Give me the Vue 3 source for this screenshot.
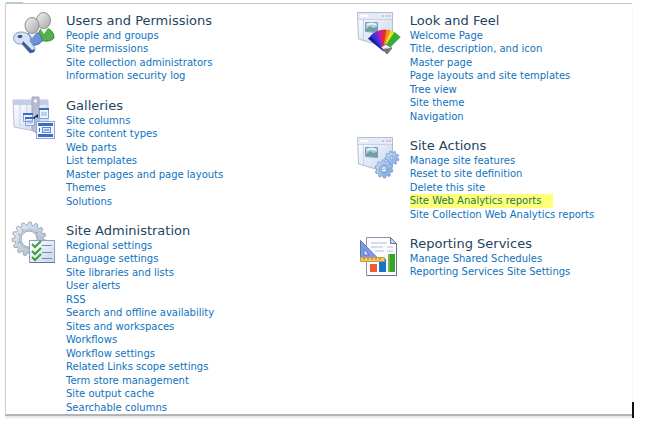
<template>
  <main class="settings-page">
    <div class="settings-panel">
      <div v-for="(column, columnIndex) in columns" :key="columnIndex" class="column">
        <section v-for="group in column" :key="group.title" class="group">
          <!-- Users and key -->
          <svg v-if="group.icon === 'users'" class="icon" viewBox="0 0 42 42" aria-hidden="true">
            <path d="M25 27c0-7 2-11 6-11 6 0 10 4 10 10-3 4-11 4-16 1z" fill="#58ad4d" stroke="#3c8a3b" />
            <path d="M27 16l4 6 4-6z" fill="#eef6ee" />
            <ellipse cx="30.500" cy="8.500" rx="7" ry="8" fill="url(#head)" stroke="#8d8d8d" />
            <path d="M13 30c0-7 1-10 7-10 6 0 9 4 9 9-3 5-12 6-16 1z" fill="#6f93d6" stroke="#4568b0" />
            <path d="M15 20l4 6 5-6z" fill="#eef3fb" />
            <ellipse cx="19" cy="13.500" rx="7" ry="8" fill="url(#head)" stroke="#8d8d8d" />
            <path d="M1 24c1-4 8-5 12-3 4 2 5 5 4 8l5 7-1 4-4 1-8-9c-5 1-10-3-8-8z" fill="#d4e3f5" stroke="#7f9cc4" />
            <path d="M9 32l8 9 4-1 1-3-3 1-9-9z" fill="#3f5f8e" />
            <ellipse cx="7" cy="24.500" rx="2.500" ry="1.700" fill="#455d80" />
          </svg>

          <!-- Galleries -->
          <svg v-else-if="group.icon === 'galleries'" class="icon" viewBox="0 0 42 42" aria-hidden="true">
            <path d="M0 3h35v24L21 34 1 30z" fill="url(#sheet)" stroke="#b9c2d8" />
            <path d="M0 3h35v5H0z" fill="#c3cdea" />
            <path d="M7 8v22M14 8v23" stroke="#c9d1e4" />
            <path d="M19 0h7v34l-3 2-4-3z" fill="#b9bdd0" stroke="#a3a9bf" />
            <circle cx="22.500" cy="4" r="1.500" fill="#fff" />
            <g fill="#eef4ff" stroke="#7ba0de">
              <path d="M10.500 16.500h9v8h-9zM12.500 20.500h9v8h-9zM26.500 11.500h9v10h-9z" />
            </g>
            <path d="M10 16h10v2H10zM12 20h10v2H12zM26 11h10v2H26z" fill="#3a6cc6" />
            <path d="M14 24h6M14 26h6M28 16h6M28 18h6" stroke="#86a8de" />
            <path d="M21 20l4-3v4l-2-1-2 2z" fill="#222b3b" />
            <rect x="23.500" y="24.500" width="18" height="17" fill="#f2f7ff" stroke="#8fa9d6" />
            <path d="M25 26h15v3H25zM25 37h15v3H25z" fill="#3c6cc4" />
            <path d="M26.500 31v4" stroke="#3c6cc4" />
            <rect x="29.500" y="30.500" width="8" height="5" fill="#dce9fc" stroke="#5c86ce" />
            <path d="M31 33h5" stroke="#3c6cc4" />
          </svg>

          <!-- Gear with checklist -->
          <svg v-else-if="group.icon === 'administration'" class="icon" viewBox="0 0 42 42" aria-hidden="true">
            <path :d="gearPath(16, 17, 17, 14, 15, 8)" fill="url(#steel)" fill-rule="evenodd" stroke="#9aa9ba" />
            <circle cx="16" cy="17" r="9.500" fill="none" stroke="#a9b9ca" />
            <path d="M5 12l2 1M9 7l1 2M5 21l2-1M25 10l-2 1" stroke="#7f94ae" />
            <rect x="16.500" y="18.500" width="25" height="22" fill="url(#sheet)" stroke="#8f9fc2" />
            <path d="M17 40.500h25" stroke="#6277a6" />
            <path d="M29 23.500h10M29 30.500h10M29 36.500h10" stroke="#7c89a8" />
            <path d="M19 22l3 3 6-6M19 29l3 3 6-6M19 35l3 3 6-6" fill="none" stroke="#3f9f32" stroke-width="2" />
          </svg>

          <!-- Report -->
          <svg v-else-if="group.icon === 'reporting'" class="icon" viewBox="0 0 42 42" aria-hidden="true">
            <path d="M9.500 2.500h24l6 6v32h-30z" fill="#fbfcff" stroke="#8994ac" />
            <path d="M10 40.500h30M39.500 9v31" stroke="#68748e" />
            <path d="M33.500 2.500v6h6z" fill="#cbd5e8" stroke="#68748e" />
            <path d="M14 8h16M14 12h12M18 16h9M30 12h6M30 16h6" stroke="#b3bdd4" />
            <path d="M13 29h7v8h-7z" fill="#ee5c31" />
            <path d="M22 24h7v13h-7z" fill="#1874c5" />
            <path d="M31 19h7v18h-7z" fill="#3aa32c" />
            <path d="M31 19h2v18h-2z" fill="#63bd50" />
            <path d="M3.500 5.500v18H21z" fill="#7c9be0" stroke="#5375c2" />
            <path d="M7 14v6h5z" fill="#e8f0ff" stroke="#5375c2" />
            <path d="M3.500 22.500h24v4h-24z" fill="#f6c968" stroke="#c99845" />
            <path d="M7 23v2M11 23v2M15 23v2M19 23v2M23 23v2" stroke="#9d7230" />
          </svg>

          <!-- Browser window with a fan of colours or two gears -->
          <svg v-else class="icon" viewBox="0 0 42 42" aria-hidden="true">
            <path d="M.5.5h35v31L22 33 1.500 27z" fill="url(#sheet)" stroke="#b4bccf" />
            <path d="M1 1h34v6H1z" fill="#e4eaf6" />
            <path d="M1 7.500h34M6.500 8v20" stroke="#c9d2e4" />
            <path d="M25 4h2M29 4h2M32 4h2" stroke="#b89aa8" />
            <path d="M3 4h8" stroke="#fff" stroke-width="2" />
            <path d="M8.500 10.500h12v10l-12-1z" fill="#a9cbed" stroke="#8298bd" />
            <path d="M9 17l4-3 3 2 4-1v5l-11-1z" fill="#6f9f99" />
            <path d="M10 13c3-2 6-2 9 0" fill="none" stroke="#e7f5ff" stroke-width="2" />
            <g v-if="group.icon === 'look'">
              <path
                v-for="(color, index) in fanColors"
                :key="color"
                d="M26 38l-2-20h8l-2 20z"
                :fill="color"
                :transform="`rotate(${index * 12 - 45} 28 38)`"
              />
              <path d="M24 35l5-3 6 4-5 6z" fill="#e4e4ea" stroke="#73737f" />
              <path d="M25 37l5 5 5-6z" fill="#73737f" />
              <circle cx="28" cy="35" r="1" fill="#fff" />
            </g>
            <g v-else fill-rule="evenodd" stroke="#7fa3d4">
              <path :d="gearPath(35, 21, 7, 5, 9, 2)" fill="url(#blueGear)" />
              <path :d="gearPath(27, 32, 9, 7, 10, 3)" fill="url(#blueGear)" />
              <circle cx="27" cy="32" r="4.500" fill="none" stroke="#7ba4d8" />
            </g>
          </svg>

          <div class="group-content">
            <h2>{{ group.title }}</h2>
            <ul>
              <li v-for="link in group.links" :key="link">
                <a href="#" :class="{ highlighted: link === highlightedLink }">{{ link }}</a>
              </li>
            </ul>
          </div>
        </section>
      </div>
      <span class="panel-tab"></span>
      <span class="caret"></span>
    </div>

    <!-- Shared gradients -->
    <svg class="gradients" width="0" height="0" aria-hidden="true">
      <defs>
        <linearGradient id="head" x2="1" y2="1">
          <stop stop-color="#f4f4f4" />
          <stop offset="1" stop-color="#a5a5a5" />
        </linearGradient>
        <linearGradient id="sheet" x2="1" y2="1">
          <stop stop-color="#ffffff" />
          <stop offset="1" stop-color="#c7d4ee" />
        </linearGradient>
        <linearGradient id="steel" x2="1" y2="1">
          <stop stop-color="#eef2f6" />
          <stop offset="1" stop-color="#9eb0c4" />
        </linearGradient>
        <linearGradient id="blueGear" x2="1" y2="1">
          <stop stop-color="#d4e6fb" />
          <stop offset="1" stop-color="#73a1dc" />
        </linearGradient>
      </defs>
    </svg>
  </main>
</template>

<script setup>
const highlightedLink = 'Site Web Analytics reports';

const fanColors = ['#1d1b9c', '#2738e0', '#7a28c8', '#cf1fa2', '#e92929', '#f58a1d', '#e8df28', '#38ad35'];

const columns = [
  [
    {
      title: 'Users and Permissions',
      icon: 'users',
      links: ['People and groups', 'Site permissions', 'Site collection administrators', 'Information security log']
    },
    {
      title: 'Galleries',
      icon: 'galleries',
      links: [
        'Site columns',
        'Site content types',
        'Web parts',
        'List templates',
        'Master pages and page layouts',
        'Themes',
        'Solutions'
      ]
    },
    {
      title: 'Site Administration',
      icon: 'administration',
      links: [
        'Regional settings',
        'Language settings',
        'Site libraries and lists',
        'User alerts',
        'RSS',
        'Search and offline availability',
        'Sites and workspaces',
        'Workflows',
        'Workflow settings',
        'Related Links scope settings',
        'Term store management',
        'Site output cache',
        'Searchable columns'
      ]
    }
  ],
  [
    {
      title: 'Look and Feel',
      icon: 'look',
      links: [
        'Welcome Page',
        'Title, description, and icon',
        'Master page',
        'Page layouts and site templates',
        'Tree view',
        'Site theme',
        'Navigation'
      ]
    },
    {
      title: 'Site Actions',
      icon: 'actions',
      links: [
        'Manage site features',
        'Reset to site definition',
        'Delete this site',
        'Site Web Analytics reports',
        'Site Collection Web Analytics reports'
      ]
    },
    {
      title: 'Reporting Services',
      icon: 'reporting',
      links: ['Manage Shared Schedules', 'Reporting Services Site Settings']
    }
  ]
];

// Toothed outline with a round hole in the middle
const gearPath = (cx, cy, outer, inner, teeth, hole) => {
  const points = [];
  const step = (Math.PI * 2) / teeth;
  for (let i = 0; i < teeth; i++) {
    [[0, inner], [0.2, outer], [0.55, outer], [0.75, inner]].forEach(([part, radius]) => {
      const angle = (i + part) * step;
      points.push(`${cx + Math.cos(angle) * radius} ${cy + Math.sin(angle) * radius}`);
    });
  }
  const ring = `M${cx - hole} ${cy}a${hole} ${hole} 0 1 0 ${hole * 2} 0a${hole} ${hole} 0 1 0 ${-hole * 2} 0z`;
  return `M${points.join('L')}z${ring}`;
};
</script>

<style>
body {
  margin: 0;
  background-color: #fff;
}
</style>

<style scoped>
.settings-page {
  padding: 3px 18px 6px 5px;
  font-family: Verdana, "DejaVu Sans", sans-serif;
}

.settings-panel {
  position: relative;
  display: grid;
  grid-template-columns: 55fr 45fr;
  padding: 8px 1px 0 0;
  border-top: 1px solid #c3c5ca;
  border-left: 1px solid #d5d5d7;
  border-bottom: 2px solid #b4b4b4;
  box-shadow: 0 2px 2px #e6e6e6;
}

.column {
  display: flex;
  flex-direction: column;
  gap: 14px;
  padding-left: 7px;
}

.group {
  display: flex;
  align-items: flex-start;
  gap: 11px;
}

.icon {
  flex: none;
  width: 42px;
  height: 42px;
  overflow: visible;
}

h2 {
  margin: 0;
  font-size: 13px;
  line-height: 17px;
  font-weight: normal;
  color: #23445f;
}

ul {
  margin: 0;
  padding: 0;
  list-style: none;
}

li {
  font-size: 10px;
  line-height: 13px;
  white-space: nowrap;
}

li:nth-child(even) {
  line-height: 14px;
}

a {
  display: inline-block;
  color: #0f73bd;
  text-decoration: none;
  vertical-align: top;
}

a:hover {
  text-decoration: underline;
}

.highlighted {
  padding-right: 12px;
  background-color: #ffff78;
  color: #217a55;
}

.panel-tab {
  position: absolute;
  top: -2px;
  left: 0;
  width: 17px;
  height: 1px;
  background-color: #a9d3dc;
}

.caret {
  position: absolute;
  right: -2px;
  bottom: -4px;
  width: 2px;
  height: 16px;
  background-color: #111;
}

.gradients {
  position: absolute;
}
</style>
